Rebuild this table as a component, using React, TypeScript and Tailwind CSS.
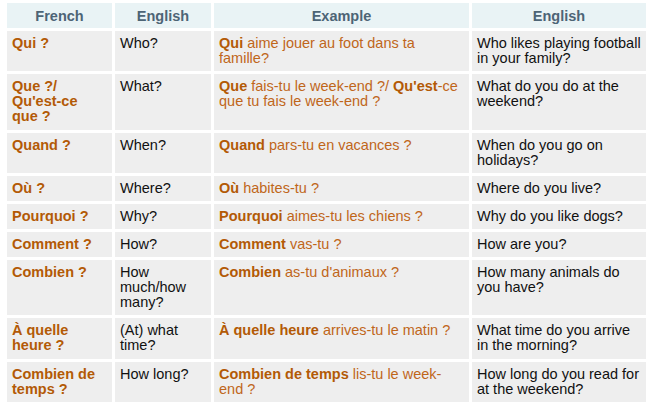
const rows: { fr: string; en: string; ex: [string, boolean][]; tr: string }[] = [
  { fr: 'Qui ?', en: 'Who?', ex: [['Qui', true], [' aime jouer au foot dans ta famille?', false]], tr: 'Who likes playing football in your family?' },
  {
    fr: "Que ?/ Qu'est-ce que ?",
    en: 'What?',
    ex: [['Que', true], [' fais-tu le week-end ?/ ', false], ["Qu'est", true], ['-ce que tu fais le week-end ?', false]],
    tr: 'What do you do at the weekend?',
  },
  { fr: 'Quand ?', en: 'When?', ex: [['Quand', true], [' pars-tu en vacances ?', false]], tr: 'When do you go on holidays?' },
  { fr: 'Où ?', en: 'Where?', ex: [['Où', true], [' habites-tu ?', false]], tr: 'Where do you live?' },
  { fr: 'Pourquoi ?', en: 'Why?', ex: [['Pourquoi', true], [' aimes-tu les chiens ?', false]], tr: 'Why do you like dogs?' },
  { fr: 'Comment ?', en: 'How?', ex: [['Comment', true], [' vas-tu ?', false]], tr: 'How are you?' },
  { fr: 'Combien ?', en: 'How much/how many?', ex: [['Combien', true], [" as-tu d'animaux ?", false]], tr: 'How many animals do you have?' },
  { fr: 'À quelle heure ?', en: '(At) what time?', ex: [['À quelle heure', true], [' arrives-tu le matin ?', false]], tr: 'What time do you arrive in the morning?' },
  { fr: 'Combien de temps ?', en: 'How long?', ex: [['Combien de temps', true], [' lis-tu le week-end ?', false]], tr: 'How long do you read for at the weekend?' },
];

const App = () => {
  return (
    <div className="min-h-screen bg-white font-['Liberation_Sans',Arial,sans-serif] text-[14.5px] leading-[15.1px]">
      <table className="ml-[4px] w-[645px] table-fixed border-separate border-spacing-[3px]">
        <thead>
          <tr>
            <th className="w-[105px] bg-[#e9f3f5] pb-[4px] pt-[6px] text-center font-bold text-[#4d6475]">French</th>
            <th className="w-[96px] bg-[#e9f3f5] pb-[4px] pt-[6px] text-center font-bold text-[#4d6475]">English</th>
            <th className="w-[255px] bg-[#e9f3f5] pb-[4px] pt-[6px] text-center font-bold text-[#4d6475]">Example</th>
            <th className="w-[174px] bg-[#e9f3f5] pb-[4px] pt-[6px] text-center font-bold text-[#4d6475]">English</th>
          </tr>
        </thead>
        <tbody>
          {rows.map((r) => (
            <tr key={r.fr}>
              <td className="bg-[#eeeeee] px-[5px] py-[5px] align-top font-bold text-[#b35a06]">{r.fr}</td>
              <td className="bg-[#eeeeee] px-[5px] py-[5px] align-top text-[#111111]">{r.en}</td>
              <td className="bg-[#eeeeee] px-[5px] py-[5px] align-top text-[#c0661a]">
                {r.ex.map(([t, b], i) =>
                  b ? (
                    <strong key={i} className="font-bold text-[#b35a06]">
                      {t}
                    </strong>
                  ) : (
                    <span key={i}>{t}</span>
                  ),
                )}
              </td>
              <td className="bg-[#eeeeee] px-[5px] py-[5px] align-top text-[#111111]">{r.tr}</td>
            </tr>
          ))}
        </tbody>
      </table>
    </div>
  );
};

export default App;
